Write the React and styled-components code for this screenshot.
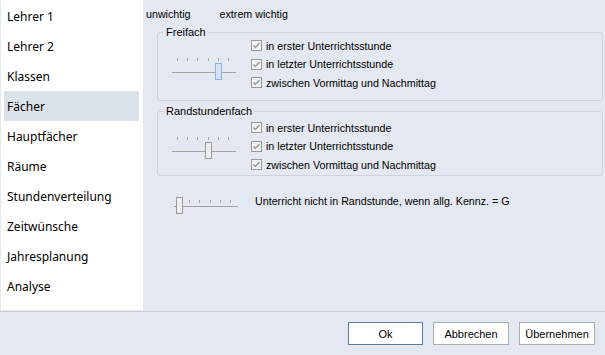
import styled, { createGlobalStyle } from "styled-components";

const GlobalStyle = createGlobalStyle`
  html, body {
    margin: 0;
    padding: 0;
    background: #e4e8f0;
  }
  #root {
    width: 605px;
    height: 355px;
  }
`;

const Window = styled.div`
  width: 605px;
  height: 355px;
  display: flex;
  flex-direction: column;
  background: #e4e8f0;
  overflow: hidden;
`;

const Body = styled.div`
  display: flex;
  height: 311px;
  flex: none;
`;

const Sidebar = styled.nav`
  width: 142px;
  margin-left: 1px;
  background: #ffffff;
  padding: 1px 4px 0 3px;
  box-sizing: border-box;
  display: flex;
  flex-direction: column;
  height: 310px;
`;

const NavItem = styled.div`
  height: 30px;
  display: flex;
  align-items: center;
  padding-left: 3px;
  font-family: "Noto Sans", sans-serif;
  font-size: 12px;
  color: #000;
  background: ${({ $active }) => ($active ? "#dbe2ea" : "transparent")};
`;

const Content = styled.div`
  flex: 1;
  padding: 7px 2px 0 3px;
  display: flex;
  flex-direction: column;
  font-family: "Liberation Sans", Arial, sans-serif;
  font-size: 10.7px;
  color: #000;
`;

const ScaleLabels = styled.div`
  display: flex;
  gap: 29px;
  height: 14px;
  align-items: center;
`;

const Group = styled.fieldset`
  margin: ${({ $gap }) => $gap}px 0 0 11px;
  padding: ${({ $top }) => $top}px 0 ${({ $bottom }) => $bottom}px 0;
  border: 1px solid #d0d4da;
  border-radius: 3px;
  display: flex;
  align-items: flex-start;
  min-width: 0;
`;

const Legend = styled.legend`
  padding: 0 2px;
  margin-left: 6px;
  font-size: 11px;
  line-height: 13px;
`;

const SliderBox = styled.div`
  width: 70px;
  height: 36px;
  margin: ${({ $offset }) => $offset}px 11px 0 12px;
`;

const Checks = styled.div`
  display: flex;
  flex-direction: column;
  gap: 5.5px;
`;

const CheckRow = styled.label`
  display: flex;
  align-items: center;
  gap: 4px;
  height: 13px;
`;

const Box = styled.span`
  width: 11px;
  height: 11px;
  box-sizing: border-box;
  border: 1px solid #9a9a9a;
  background: #f2f3f5;
  display: flex;
  align-items: center;
  justify-content: center;
`;

const SingleRow = styled.div`
  display: flex;
  align-items: flex-start;
  margin: 13px 0 0 26px;
  gap: 13px;
`;

const SingleText = styled.span`
  margin-top: 6px;
  line-height: 13px;
`;

const Footer = styled.div`
  border-top: 1px solid #c8ccd2;
  flex: 1;
  display: flex;
  justify-content: flex-end;
  align-items: flex-start;
  padding: 10px 10px 0 0;
  gap: 10px;
`;

const Button = styled.button`
  width: ${({ $w }) => $w}px;
  height: 23px;
  background: #ffffff;
  border: 1px solid ${({ $primary }) => ($primary ? "#5a7aa2" : "#adadad")};
  font-family: "Liberation Sans", Arial, sans-serif;
  font-size: 11px;
  color: #000;
  padding: 0;
`;

function Slider({ value, thumbColor, thumbBorder, tickTop = 3, trackY = 17 }) {
  const ticks = [7, 17, 27, 38, 48, 58];
  const cx = ticks[value];
  return (
    <svg width="70" height="36" viewBox="0 0 70 36">
      {ticks.map((x) => (
        <line key={x} x1={x + 0.5} x2={x + 0.5} y1={tickTop} y2={tickTop + 3} stroke="#a8a8a8" />
      ))}
      <line x1="2" x2="66" y1={trackY + 0.5} y2={trackY + 0.5} stroke="#a4a4a4" />
      <rect
        x={cx - 2.5}
        y={trackY - 8.5}
        width="6"
        height="16"
        fill={thumbColor}
        stroke={thumbBorder}
      />
    </svg>
  );
}

function Check({ children }) {
  return (
    <CheckRow>
      <Box>
        <svg width="9" height="9" viewBox="0 0 9 9">
          <path d="M1.5 4.5 L3.5 6.5 L7.5 2" fill="none" stroke="#8c8c8c" strokeWidth="1.2" />
        </svg>
      </Box>
      {children}
    </CheckRow>
  );
}

const items = [
  "Lehrer 1",
  "Lehrer 2",
  "Klassen",
  "Fächer",
  "Hauptfächer",
  "Räume",
  "Stundenverteilung",
  "Zeitwünsche",
  "Jahresplanung",
  "Analyse",
];

const checks = [
  "in erster Unterrichtsstunde",
  "in letzter Unterrichtsstunde",
  "zwischen Vormittag und Nachmittag",
];

export default function App() {
  return (
    <Window>
      <GlobalStyle />
      <Body>
        <Sidebar>
          {items.map((it) => (
            <NavItem key={it} $active={it === "Fächer"}>
              {it}
            </NavItem>
          ))}
        </Sidebar>
        <Content>
          <ScaleLabels>
            <span>unwichtig</span>
            <span>extrem wichtig</span>
          </ScaleLabels>
          <Group $gap={5} $top={0} $bottom={9}>
            <Legend>Freifach</Legend>
            <SliderBox $offset={16}>
              <Slider value={4} thumbColor="#d3e2f4" thumbBorder="#8fb2df" />
            </SliderBox>
            <Checks>
              {checks.map((c) => (
                <Check key={c}>{c}</Check>
              ))}
            </Checks>
          </Group>
          <Group $gap={4} $top={3} $bottom={4}>
            <Legend>Randstundenfach</Legend>
            <SliderBox $offset={13}>
              <Slider value={3} thumbColor="#eceef1" thumbBorder="#9a9a9a" />
            </SliderBox>
            <Checks>
              {checks.map((c) => (
                <Check key={c}>{c}</Check>
              ))}
            </Checks>
          </Group>
          <SingleRow>
            <Slider value={0} thumbColor="#eceef1" thumbBorder="#9a9a9a" tickTop={11} />
            <SingleText>Unterricht nicht in Randstunde, wenn allg. Kennz. = G</SingleText>
          </SingleRow>
        </Content>
      </Body>
      <Footer>
        <Button $primary $w={75}>Ok</Button>
        <Button $w={76}>Abbrechen</Button>
        <Button $w={76}>Übernehmen</Button>
      </Footer>
    </Window>
  );
}
